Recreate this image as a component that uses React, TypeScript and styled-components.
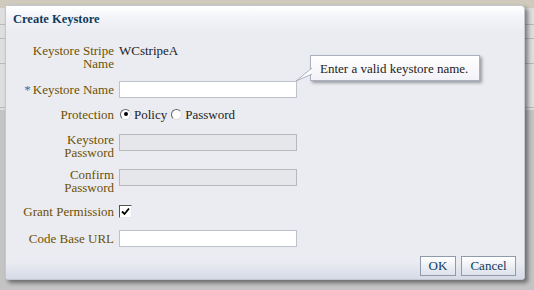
import React from "react";
import styled, { createGlobalStyle } from "styled-components";

const GlobalStyle = createGlobalStyle`
  html, body {
    margin: 0;
    padding: 0;
  }
  body {
    width: 534px;
    height: 290px;
    overflow: hidden;
    font-family: "Liberation Serif", "Times New Roman", serif;
    font-size: 13px;
    background: #c6c6c6;
  }
`;

const Page = styled.div`
  width: 534px;
  height: 290px;
  box-sizing: border-box;
  padding: 5px 9px 10px 5px;
  background:
    linear-gradient(#cfcabb 0 8px, transparent 8px),
    linear-gradient(transparent 24px, #b9b9b9 24px 25px, transparent 25px 38px, #b9b9b9 38px 39px, transparent 39px 63px, #b9b9b9 63px 64px, transparent 64px 107px, #b9b9b9 107px 108px, transparent 108px),
    linear-gradient(#dedede 0 110px, #c4c4c4 110px);
`;

const Dialog = styled.div`
  width: 520px;
  height: 275px;
  box-sizing: border-box;
  display: flex;
  flex-direction: column;
  background: #ebecf2;
  border: 1px solid #c2c7d2;
  border-radius: 0 4px 3px 3px;
  box-shadow: 3px 3px 4px rgba(0, 0, 0, 0.45);
`;

const Header = styled.div`
  height: 26px;
  display: flex;
  align-items: center;
  padding: 0 0 0 7px;
  background: linear-gradient(#ffffff, #f4f5f9 40%, #ebecf2);
  border-radius: 0 4px 0 0;
`;

const Title = styled.h1`
  margin: 0;
  font-size: 12.5px;
  font-weight: bold;
  color: #0e3b5d;
`;

const Form = styled.div`
  flex: 1;
  display: flex;
  flex-direction: column;
  padding-top: 12px;
`;

const Row = styled.div<{ $gap: number; $align?: string; $min?: number }>`
  display: flex;
  align-items: ${(p) => p.$align ?? "center"};
  gap: 5px;
  min-height: ${(p) => p.$min ?? 0}px;
  margin-bottom: ${(p) => p.$gap}px;
`;

const Label = styled.div`
  width: 108px;
  flex: none;
  text-align: right;
  color: #6d5103;
  line-height: 13px;
`;

const Star = styled.span`
  color: #3a68a8;
  margin-right: 2px;
`;

const Field = styled.div<{ $top?: number }>`
  display: flex;
  align-items: center;
  color: #222;
  line-height: 13px;
  position: relative;
  margin-top: ${(p) => p.$top ?? 0}px;
`;

const Input = styled.input<{ $disabled?: boolean }>`
  width: 178px;
  height: 17px;
  box-sizing: border-box;
  margin: 0;
  padding: 0 2px;
  border: 1px solid ${(p) => (p.$disabled ? "#b9b9bd" : "#bcc3cd")};
  background: ${(p) => (p.$disabled ? "#e6e7eb" : "#ffffff")};
  outline: none;
  font: inherit;
`;

const Radio = styled.span<{ $checked?: boolean }>`
  width: 11px;
  height: 11px;
  border-radius: 50%;
  box-sizing: border-box;
  border: 1px solid #666;
  border-right-color: #ddd;
  border-bottom-color: #ddd;
  background: #fff;
  display: inline-flex;
  align-items: center;
  justify-content: center;
  margin: 0 3px 0 1px;
  &::after {
    content: "";
    width: 4px;
    height: 4px;
    border-radius: 50%;
    background: ${(p) => (p.$checked ? "#000" : "transparent")};
  }
`;

const Option = styled.span`
  margin-right: 3px;
`;

const Check = styled.span`
  width: 13px;
  height: 13px;
  box-sizing: border-box;
  border: 1px solid #555;
  border-right-color: #e8e8e8;
  border-bottom-color: #e8e8e8;
  background: #fff;
  display: inline-flex;
  align-items: center;
  justify-content: center;
`;

const Tip = styled.div`
  position: absolute;
  left: 191px;
  top: -26px;
  width: 170px;
  height: 26px;
  box-sizing: border-box;
  display: flex;
  align-items: center;
  padding: 1px 0 0 9px;
  color: #222;
  white-space: nowrap;
  background: linear-gradient(#ffffff, #f2f3f8);
  border: 1px solid #a9b0bf;
  box-shadow: 2px 2px 3px rgba(0, 0, 0, 0.35);
`;

const TipArrow = styled.svg`
  position: absolute;
  left: -15px;
  top: 10px;
  overflow: visible;
`;

const Footer = styled.div`
  height: 24px;
  display: flex;
  justify-content: flex-end;
  align-items: flex-start;
  gap: 5px;
  padding: 1px 8px 0 0;
  box-sizing: border-box;
  background: linear-gradient(#ebecf2 0, #ebecf2 7px, #d5dae6);
  border-radius: 0 0 3px 3px;
`;

const Button = styled.button<{ $w: number }>`
  width: ${(p) => p.$w}px;
  height: 20px;
  padding: 0;
  font: inherit;
  color: #0e3b5d;
  border: 1px solid #8f9aad;
  background: linear-gradient(#ffffff, #eef0f5 50%, #dde1ea);
  cursor: pointer;
`;

export default function App() {
  return (
    <Page>
      <GlobalStyle />
      <Dialog>
        <Header>
          <Title>Create Keystore</Title>
        </Header>
        <Form>
          <Row $gap={11} $align="flex-start">
            <Label>
              Keystore Stripe
              <br />
              Name
            </Label>
            <Field>WCstripeA</Field>
          </Row>

          <Row $gap={9}>
            <Label>
              <Star>*</Star>Keystore Name
            </Label>
            <Field>
              <Input />
              <Tip>
                <TipArrow width="16" height="20" viewBox="0 0 16 20">
                  <path d="M16 2 L0 15 L16 8 Z" fill="#ffffff" />
                  <path d="M16 2 L0 15 L16 8" fill="none" stroke="#a9b0bf" strokeWidth="1" />
                </TipArrow>
                Enter a valid keystore name.
              </Tip>
            </Field>
          </Row>

          <Row $gap={12} $min={14}>
            <Label>Protection</Label>
            <Field>
              <Radio $checked />
              <Option>Policy</Option>
              <Radio />
              <Option>Password</Option>
            </Field>
          </Row>

          <Row $gap={9} $align="flex-start">
            <Label>
              Keystore
              <br />
              Password
            </Label>
            <Field $top={1}>
              <Input $disabled disabled />
            </Field>
          </Row>

          <Row $gap={10} $align="flex-start">
            <Label>
              Confirm
              <br />
              Password
            </Label>
            <Field $top={1}>
              <Input $disabled disabled />
            </Field>
          </Row>

          <Row $gap={12} $min={14}>
            <Label>Grant Permission</Label>
            <Field>
              <Check>
                <svg width="9" height="9" viewBox="0 0 9 9">
                  <path d="M1 4.5 L3.5 7 L8 1.5" fill="none" stroke="#000" strokeWidth="1.8" />
                </svg>
              </Check>
            </Field>
          </Row>

          <Row $gap={0}>
            <Label>Code Base URL</Label>
            <Field>
              <Input />
            </Field>
          </Row>
        </Form>
        <Footer>
          <Button $w={36}>OK</Button>
          <Button $w={55}>Cancel</Button>
        </Footer>
      </Dialog>
    </Page>
  );
}
